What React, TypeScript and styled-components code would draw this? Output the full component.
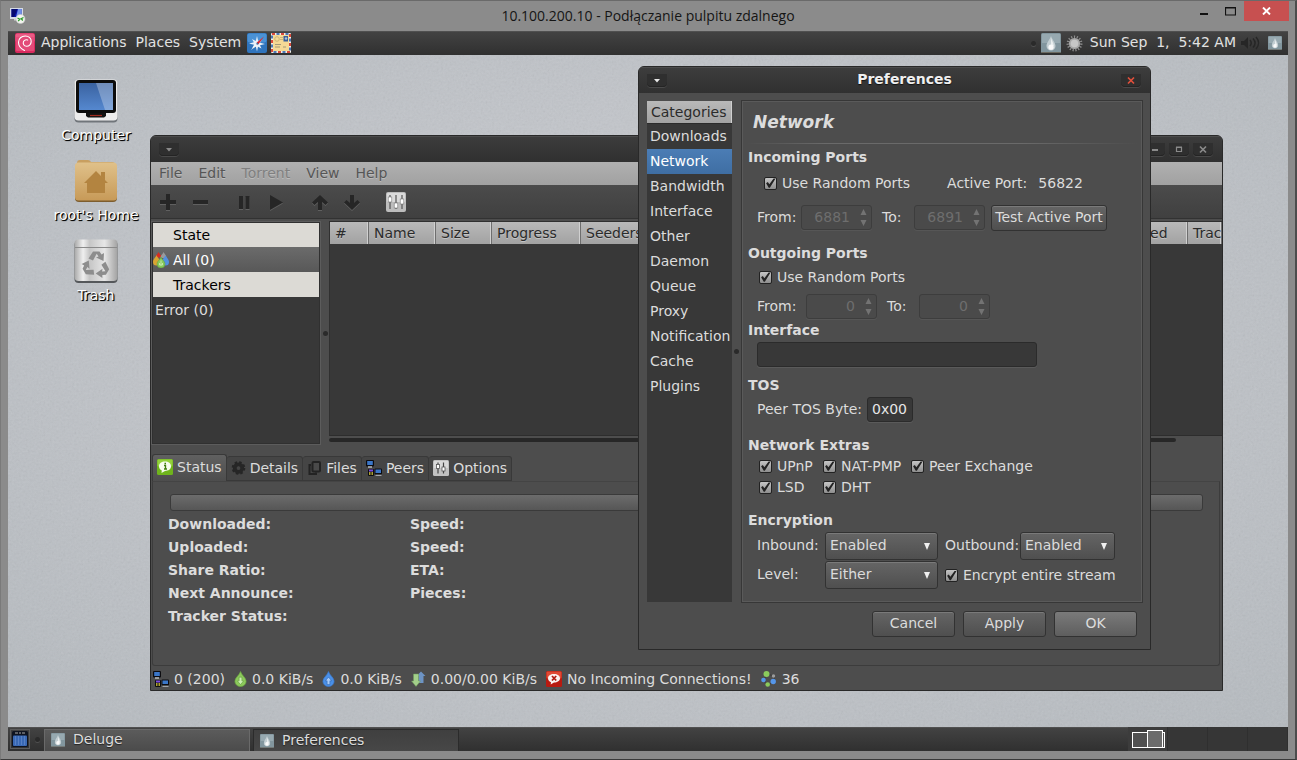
import React from "react";
import styled, { createGlobalStyle, css } from "styled-components";

const Global = createGlobalStyle`
  *, *::before, *::after { box-sizing: border-box; }
  body { margin: 0; background: #8b8b8b; }
  body, button, input, select, table {
    font-family: "DejaVu Sans", sans-serif;
    font-size: 14px;
    line-height: 18px;
    color: #dcdcdc;
  }
  button { border: 0; padding: 0; background: none; white-space: nowrap; }
  h1, h2, h3, p, ul, dl, dd, dt { margin: 0; padding: 0; }
  ul { list-style: none; }
  svg { display: block; flex: none; }
`;

/* ---------- remote session frame ---------- */

const Session = styled.div`
  display: flex;
  flex-direction: column;
  min-height: 100vh;
  background: #8b8b8b;
  border-top: 1px solid #6a6a6a;
  border-left: 1px solid #7a7a7a;
  border-right: 2px solid #4c4c4c;
  border-bottom: 1px solid #3a3a3a;
`;

const SessionBar = styled.header`
  display: grid;
  grid-template-columns: 1fr auto 1fr;
  height: 30px;
`;

const SessionIcon = styled.div`
  padding: 6px 0 0 8px;
`;

const SessionTitle = styled.h1`
  font-family: "Open Sans", "Noto Sans", sans-serif;
  font-weight: 400;
  font-size: 14px;
  line-height: 30px;
  color: #151515;
`;

const CaptionButtons = styled.div`
  display: flex;
  justify-content: flex-end;
  padding-right: 6px;
`;

const CaptionButton = styled.button<{ $close?: boolean }>`
  display: flex;
  align-items: center;
  justify-content: center;
  width: ${(p) => (p.$close ? 45 : 27)}px;
  height: 20px;
  background: ${(p) => (p.$close ? "#c75050" : "transparent")};
`;

const Remote = styled.div`
  flex: 1;
  display: flex;
  flex-direction: column;
  margin: 0 7px 8px 7px;
`;

/* ---------- desktop panels ---------- */

const Panel = styled.div`
  display: flex;
  align-items: center;
  height: 24px;
  flex: none;
  background: linear-gradient(#434343, #303030);
  box-shadow: inset 0 1px 0 #505050;
`;

const PanelMenus = styled.nav`
  display: flex;
  gap: 9px;
  margin: 0 6px 0 6px;
`;

const PanelMenu = styled.button`
  color: #e2e2e2;
  padding-bottom: 2px;
  line-height: 20px;
`;

const PanelIcons = styled.div`
  display: flex;
  gap: 4px;
`;

const Tray = styled.div`
  display: flex;
  align-items: center;
  margin-left: auto;
  padding-right: 6px;
`;

const TrayItem = styled.span<{ $gap?: number }>`
  display: flex;
  align-items: center;
  margin-left: ${(p) => p.$gap ?? 5}px;
`;

const Clock = styled.time`
  margin-left: 7px;
  padding-bottom: 2px;
  white-space: pre;
  line-height: 20px;
  color: #e2e2e2;
`;

const Handle = styled.span`
  width: 5px;
  height: 5px;
  border-radius: 50%;
  background: #2a2a2a;
  box-shadow: 0 1px 0 #505050;
`;

const ShowDesktop = styled.button`
  display: flex;
  align-items: center;
  justify-content: center;
  width: 20px;
  height: 20px;
  margin: 0 5px 0 2px;
  border: 1px solid #5c5c5c;
`;

const Task = styled.button<{ $active?: boolean }>`
  display: flex;
  align-items: center;
  gap: 8px;
  align-self: flex-end;
  width: 206px;
  height: 22px;
  margin-left: ${(p) => (p.$active ? 3 : 4)}px;
  padding: ${(p) => (p.$active ? "1px 0 0 7px" : "0 0 1px 7px")};
  text-shadow: 0 1px 1px #222;
  background: ${(p) => (p.$active ? "linear-gradient(#3f3f3f, #474747)" : "linear-gradient(#5c5c5c, #4b4b4b)")};
  box-shadow: ${(p) => (p.$active ? "inset 1px 1px 0 #2b2b2b, inset -1px 0 0 #2b2b2b" : "inset 1px 1px 0 #6a6a6a, inset -1px 0 0 #6a6a6a")};
`;

const TaskLabel = styled.span`
  padding-bottom: 2px;
`;

const Pager = styled.div`
  display: flex;
  align-self: stretch;
  margin-left: auto;
`;

const Space = styled.span<{ $current?: boolean }>`
  display: flex;
  align-items: center;
  width: 40px;
  padding-left: 4px;
  border-right: 1px solid #2f2f2f;
  background: ${(p) => (p.$current ? "#3c3c3c" : "#363636")};
`;

/* ---------- wallpaper and desktop icons ---------- */

const Desktop = styled.main`
  position: relative;
  flex: 1;
  overflow: hidden;
  background: radial-gradient(ellipse at 50% 45%, #cbcdd3 0%, #c2c5ca 45%, #b5babf 100%);
`;

const Grain = styled.svg`
  position: absolute;
  inset: 0;
  width: 100%;
  height: 100%;
  opacity: 0.16;
`;

const DesktopIcon = styled.button<{ $top: number }>`
  position: absolute;
  left: 31px;
  top: ${(p) => p.$top}px;
  width: 114px;
  display: flex;
  flex-direction: column;
  align-items: center;
  gap: 3px;
  color: #fff;
  text-shadow: 1px 1px 1px #000, 1px 1px 0 #222;
`;

/* ---------- window chrome ---------- */

const Frame = styled.section<{ $left: number; $top: number; $width: number; $height: number }>`
  position: absolute;
  left: ${(p) => p.$left}px;
  top: ${(p) => p.$top}px;
  width: ${(p) => p.$width}px;
  height: ${(p) => p.$height}px;
  display: flex;
  flex-direction: column;
  overflow: hidden;
  background: #4d4d4d;
  border: 1px solid #292929;
  border-radius: 6px 6px 0 0;
`;

const TitleBar = styled.header`
  display: grid;
  grid-template-columns: 1fr auto 1fr;
  align-items: center;
  height: 26px;
  flex: none;
  background: linear-gradient(#3d3d3d, #303030);
  box-shadow: inset 0 1px 0 #4c4c4c;
`;

const TitleText = styled.h2`
  padding: 0 0 2px 20px;
  font-size: 14px;
  line-height: 22px;
  color: #f0f0f0;
  text-shadow: 0 1px 1px #111;
`;

const TitleGroup = styled.div<{ $end?: boolean }>`
  display: flex;
  gap: 4px;
  padding: 0 9px 0 8px;
  justify-content: ${(p) => (p.$end ? "flex-end" : "flex-start")};
`;

const TitleButton = styled.button`
  display: flex;
  align-items: center;
  justify-content: center;
  width: 20px;
  height: 13px;
  border-radius: 0 0 4px 4px;
  background: #2f2f2f;
  box-shadow: 0 1px 0 #4a4a4a, inset 0 -1px 0 #242424;
`;

/* ---------- torrent client ---------- */

const MenuBar = styled.nav`
  display: flex;
  height: 23px;
  flex: none;
  background: linear-gradient(#b0b0b0, #a1a1a1);
`;

const MenuItem = styled.button`
  padding: 0 8px 2px;
  line-height: 20px;
  color: #565656;
  text-shadow: 0 1px 0 #bcbcbc;
  &:disabled { color: #808080; }
`;

const ToolBar = styled.div`
  display: flex;
  align-items: center;
  gap: 12px;
  height: 34px;
  flex: none;
  padding-left: 1px;
  background: linear-gradient(#4b4b4b, #404040);
  border-bottom: 1px solid #323232;
`;

const ToolGroup = styled.div`
  display: flex;
`;

const ToolButton = styled.button`
  display: flex;
  align-items: center;
  justify-content: center;
  width: 32px;
  height: 30px;
`;

const Split = styled.div`
  display: flex;
  height: 226px;
  flex: none;
  padding-top: 2px;
`;

const SideList = styled.div`
  width: 170px;
  flex: none;
  background: #383838;
  border: 1px solid #5c5c5c;
  outline: 1px solid #303030;
  outline-offset: -2px;
`;

const SideRow = styled.button<{ $kind: "group" | "selected" | "plain" }>`
  display: flex;
  align-items: center;
  gap: 4px;
  width: 100%;
  height: 25px;
  padding-left: 1px;
  ${(p) =>
    p.$kind === "group" &&
    css`
      color: #000;
      background: #dcdad5;
      padding-left: 21px;
    `}
  ${(p) =>
    p.$kind === "selected" &&
    css`
      color: #fff;
      background: linear-gradient(#6b6b6b, #585858);
    `}
  ${(p) => p.$kind === "plain" && css` padding-left: 3px; `}
`;

const PaneGap = styled.div<{ $width: number }>`
  display: flex;
  align-items: center;
  justify-content: center;
  width: ${(p) => p.$width}px;
  flex: none;
`;

const ListPane = styled.div`
  flex: 1;
  min-width: 0;
  display: flex;
  flex-direction: column;
`;

const ListArea = styled.div`
  height: 215px;
  background: #383838;
  border-top: 1px solid #303030;
  border-bottom: 1px solid #2d2d2d;
  border-left: 1px solid #303030;
  overflow: hidden;
`;

const Columns = styled.table`
  width: 100%;
  table-layout: fixed;
  border-collapse: collapse;
`;

const Column = styled.th<{ $width: number }>`
  width: ${(p) => p.$width}px;
  height: 22px;
  padding: 0 0 0 5px;
  overflow: hidden;
  text-align: left;
  font-weight: 400;
  line-height: 20px;
  white-space: nowrap;
  color: #2b2b2b;
  background: linear-gradient(#b9b9b9, #a2a2a2);
  box-shadow: inset -1px 0 0 #6e6e6e, inset -2px 0 0 #d0d0d0;
  text-shadow: 0 1px 0 #c4c4c4;
`;

const ScrollTrack = styled.div`
  width: 847px;
  height: 4px;
  margin-top: 2px;
  border-radius: 2px;
  background: #272727;
`;

const Notebook = styled.div`
  flex: 1;
  display: flex;
  flex-direction: column;
  padding: 9px 2px 0 1px;
`;

const TabRow = styled.div`
  display: flex;
  align-items: flex-end;
  height: 27px;
`;

const Tab = styled.button<{ $active?: boolean }>`
  display: flex;
  align-items: center;
  gap: 4px;
  height: ${(p) => (p.$active ? 27 : 25)}px;
  padding: ${(p) => (p.$active ? "0 4px 2px" : "0 4px 1px")};
  border: 1px solid #393939;
  border-left-width: ${(p) => (p.$active ? 1 : 0)}px;
  border-bottom: ${(p) => (p.$active ? "0" : "1px solid #393939")};
  border-radius: 3px 3px 0 0;
  background: ${(p) => (p.$active ? "linear-gradient(#606060, #4d4d4d)" : "#454545")};
`;

const TabPage = styled.div`
  flex: 1;
  border: 1px solid #3c3c3c;
  border-top-color: #444;
  border-radius: 0 0 3px 3px;
  padding: 12px 16px 0 15px;
`;

const Gauge = styled.div`
  height: 17px;
  margin-left: 2px;
  border: 1px solid #3a3a3a;
  border-radius: 3px;
  background: linear-gradient(#6c6c6c, #565656);
`;

const Stats = styled.dl`
  display: grid;
  grid-template-columns: 242px 1fr;
  grid-auto-rows: 18px;
  row-gap: 5px;
  margin-top: 4px;
  font-weight: 700;
`;

const StatusBar = styled.footer`
  display: flex;
  align-items: center;
  gap: 9px;
  height: 24px;
  flex: none;
  padding: 1px 0 0 2px;
`;

const StatusItem = styled.span`
  display: flex;
  align-items: center;
  gap: 5px;
  white-space: nowrap;
`;

/* ---------- preferences dialog ---------- */

const DialogBody = styled.div`
  display: flex;
  padding: 7px 7px 0 8px;
`;

const Categories = styled.nav`
  width: 85px;
  height: 501px;
  margin-top: 1px;
  flex: none;
  background: #383838;
`;

const CategoryHead = styled.div`
  height: 23px;
  padding-left: 4px;
  line-height: 23px;
  color: #2b2b2b;
  background: linear-gradient(#b9b9b9, #a2a2a2);
  border-bottom: 1px solid #2b2b2b;
  box-shadow: inset -1px 0 0 #d0d0d0;
`;

const Category = styled.button<{ $selected?: boolean }>`
  display: block;
  width: 100%;
  height: 25px;
  padding: 0 0 2px 3px;
  text-align: left;
  color: ${(p) => (p.$selected ? "#fff" : "#dcdcdc")};
  background: ${(p) => (p.$selected ? "linear-gradient(#4b7db5, #3f6ea3)" : "transparent")};
`;

const Page = styled.div`
  flex: 1;
  height: 503px;
  padding: 0 5px 0 6px;
  border: 1px solid #373737;
  box-shadow: inset 0 0 0 1px #5a5a5a;
`;

const PageTitle = styled.h2`
  height: 43px;
  padding-left: 5px;
  font-size: 17px;
  font-style: italic;
  line-height: 43px;
  border-bottom: 1px solid;
  border-image: linear-gradient(90deg, #4d4d4d, #6a6a6a 20%, #6a6a6a 70%, #4d4d4d) 1;
`;

const Section = styled.section<{ $gap: number }>`
  margin-top: ${(p) => p.$gap}px;
`;

const SectionTitle = styled.h3`
  font-size: 14px;
  line-height: 18px;
`;

const Row = styled.div<{ $top?: number; $indent?: number; $height?: number }>`
  display: flex;
  align-items: center;
  height: ${(p) => p.$height ?? 25}px;
  margin-top: ${(p) => p.$top ?? 0}px;
  padding-left: ${(p) => p.$indent ?? 9}px;
  white-space: nowrap;
`;

const Label = styled.label<{ $width?: number }>`
  width: ${(p) => (p.$width ? `${p.$width}px` : "auto")};
  flex: none;
  padding-bottom: 2px;
  white-space: nowrap;
`;

const CheckLabel = styled.label`
  display: flex;
  align-items: center;
  gap: 5px;
  height: 21px;
  white-space: nowrap;
`;

const Check = styled.input.attrs({ type: "checkbox" })`
  appearance: none;
  width: 13px;
  height: 13px;
  margin: 1px 0 0;
  flex: none;
  border: 1px solid #222;
  border-radius: 2px;
  background: linear-gradient(#c4c4c4, #8e8e8e);
  &:checked::before {
    content: "";
    display: block;
    width: 11px;
    height: 11px;
    background: #222;
    clip-path: polygon(10% 52%, 25% 42%, 40% 62%, 78% 8%, 96% 8%, 44% 94%, 34% 94%);
  }
`;

const SpinBox = styled.div`
  display: flex;
  align-items: center;
  width: 71px;
  height: 25px;
  flex: none;
  padding-right: 3px;
  border: 1px solid #3d3d3d;
  border-radius: 3px;
  background: #4a4a4a;
  box-shadow: 0 1px 0 #565656;
`;

const SpinInput = styled.input`
  flex: 1;
  min-width: 0;
  padding: 0 9px 2px 0;
  border: 0;
  background: none;
  text-align: right;
  color: #6e6e6e;
`;

const ToLabel = styled(Label)`
  margin-left: 10px;
`;

const Entry = styled.input<{ $width: number }>`
  width: ${(p) => p.$width}px;
  height: 25px;
  padding: 0 4px 2px;
  border: 1px solid #2b2b2b;
  border-radius: 3px;
  background: #383838;
  color: #e6e6e6;
  box-shadow: 0 1px 0 #5a5a5a;
`;

const PushButton = styled.button<{ $width: number; $default?: boolean }>`
  width: ${(p) => p.$width}px;
  height: 26px;
  padding-bottom: 2px;
  border: 1px solid #323232;
  border-radius: 3px;
  background: ${(p) => (p.$default ? "linear-gradient(#7a7a7a, #5e5e5e)" : "linear-gradient(#656565, #4f4f4f)")};
  box-shadow: inset 0 1px 0 #7a7a7a;
`;

const TestButton = styled(PushButton)`
  margin-left: 6px;
`;

const Value = styled.span`
  margin-left: 11px;
`;

const ActivePort = styled.span`
  margin-left: 37px;
`;

const Extras = styled.div`
  display: grid;
  grid-template-columns: 64px 88px auto;
  margin-top: 1px;
  padding-left: 11px;
`;

const Encryption = styled.div`
  display: grid;
  grid-template-columns: 68px 113px 6px auto;
  row-gap: 1px;
  align-items: center;
  margin-top: 3px;
  padding-left: 9px;
`;

const Cell = styled.div`
  grid-column: 4;
  display: flex;
  align-items: center;
  padding-left: 1px;
`;

const Drop = styled.span<{ $width: number }>`
  position: relative;
  display: block;
  width: ${(p) => p.$width}px;
  height: 28px;
  svg { position: absolute; right: 7px; top: 11px; pointer-events: none; }
`;

const Select = styled.select`
  appearance: none;
  width: 100%;
  height: 28px;
  padding: 0 0 2px 4px;
  border: 1px solid #323232;
  border-radius: 3px;
  background: linear-gradient(#656565, #4f4f4f);
  box-shadow: inset 0 1px 0 #7a7a7a;
`;

const Actions = styled.div`
  display: flex;
  justify-content: flex-end;
  gap: 8px;
  padding: 8px 13px 0 0;
`;

/* ---------- drawings ---------- */

const SessionGlyph = () => (
  <svg width="17" height="17" viewBox="0 0 17 17">
    <path d="M1 1h13v11H1z" fill="#d5dbe6" />
    <path d="M2.500 2h10v8h-10z" fill="#0a14a8" />
    <path d="M2.500 2h6L5 10H2.500z" fill="#060a70" />
    <path d="M9 2h3.500v8H7z" fill="#6f8fe8" />
    <path d="M5 12h5v1.500H5z" fill="#cfcfcf" />
    <circle cx="11.500" cy="12" r="4.500" fill="#f3f5f0" stroke="#c8c8c8" strokeWidth=".6" />
    <path d="M8.500 11l2.300 1.200-1.600 2M14.500 10.500l-2.300 1.200 1.600 1.800" fill="none" stroke="#2b9b2b" strokeWidth="1.300" />
  </svg>
);

const DebianGlyph = () => (
  <svg width="20" height="20" viewBox="0 0 20 20">
    <rect width="20" height="20" rx="2" fill="#d9295e" />
    <rect x=".5" y=".5" width="19" height="9" rx="2" fill="#ea5a84" />
    <rect x="1" y="4" width="18" height="14" rx="1" fill="#e34a78" />
    <path
      d="M9.500 17.500C5.500 15.500 3.500 12.500 3.500 9.200 3.500 5.600 6.500 3 10.200 3c3.800 0 6.200 2.500 6 5.600-.2 3-2.300 4.900-4.700 4.700-2.600-.2-3.800-2.600-3-4.700.8-1.700 2.600-2.300 4.200-1.500"
      fill="none"
      stroke="#fff"
      strokeWidth="1.100"
      strokeLinecap="round"
    />
  </svg>
);

const CompassGlyph = () => (
  <svg width="20" height="20" viewBox="0 0 20 20">
    <rect width="20" height="20" rx="2" fill="#2f74bd" />
    <rect x=".5" y=".5" width="19" height="9" rx="2" fill="#4a92d6" />
    <path d="M10 3l1.200 5L15 6l-2 3.800 5 1.200-5 1.200 1.500 3.300-3.500-1.800L10 18.500l-1.200-5L5 15.500l2-3.800L2 10.500l4.800-1.200L5 6l3.800 2z" fill="#e8f1fa" />
    <path d="M17 3.500L11.300 11.500 9.500 9.800z" fill="#d9242c" />
    <path d="M4 17L9.500 9.800l1.800 1.700z" fill="#f4f4f4" />
    <circle cx="10.300" cy="10.700" r="1" fill="#3a6ea5" />
  </svg>
);

const MailGlyph = () => (
  <svg width="20" height="20" viewBox="0 0 20 20">
    <rect width="20" height="20" rx="1" fill="#f3efe6" />
    <rect x="1" y="1" width="18" height="18" fill="none" stroke="#d8493c" strokeWidth="2" strokeDasharray="3 6" />
    <rect x="1" y="1" width="18" height="18" fill="none" stroke="#4b77b5" strokeWidth="2" strokeDasharray="3 6" strokeDashoffset="-4.500" />
    <rect x="2" y="2" width="16" height="16" fill="#f5d995" />
    <rect x="12.500" y="3" width="4.500" height="5.500" fill="#3b5f97" />
    <circle cx="15" cy="5.500" r="1.200" fill="#a9c2e2" />
    <circle cx="6" cy="6" r="2.300" fill="none" stroke="#cdb677" />
    <path d="M9 4.500h3M9 6.500h3" stroke="#cdb677" />
    <path d="M4 11.500h6M4 14h5M12 14h3" stroke="#a39a78" />
  </svg>
);

const DropGlyph = ({ size }: { size: number }) => (
  <svg width={size} height={size} viewBox="0 0 20 20">
    <rect width="20" height="20" rx="1.500" fill="#82969e" />
    <rect x="1" y="1" width="18" height="9" fill="#97a9b0" />
    <path d="M.5 19.500h19" stroke="#6d6a60" />
    <path d="M10 3c1 3.500 4.500 6.500 4.500 10a4.500 4.500 0 0 1-9 0c0-3.500 3.500-6.500 4.500-10z" fill="#c3ced2" />
    <path d="M10 5c.7 3 2.800 5 2.800 8h-2.800z" fill="#e9eeef" />
    <circle cx="10" cy="14.200" r="2.600" fill="#fafafa" />
  </svg>
);

const SunGearGlyph = () => (
  <svg width="17" height="17" viewBox="0 0 17 17">
    <circle cx="8.500" cy="8.500" r="6.700" fill="none" stroke="#8f8f8f" strokeWidth="2.500" strokeDasharray="1.200 1.600" />
    <circle cx="8.500" cy="8.500" r="5.600" fill="#a8a8a8" />
    <circle cx="8.500" cy="8.500" r="3.800" fill="#c6c6c6" />
  </svg>
);

const SpeakerGlyph = () => (
  <svg width="20" height="14" viewBox="0 0 20 14">
    <path d="M0 5h3l4-4v12L3 9H0z" fill="#262626" />
    <path d="M9 4c1.500 1.800 1.500 4.200 0 6M12 2.500c2.500 2.700 2.500 6.300 0 9M15 1c3.300 3.600 3.300 8.400 0 12" fill="none" stroke="#262626" strokeWidth="1.500" />
  </svg>
);

const ComputerGlyph = () => (
  <svg width="44" height="44" viewBox="0 0 44 44">
    <defs>
      <linearGradient id="screen" x1="0" y1="0" x2="0" y2="1">
        <stop offset="0" stopColor="#3a62a0" />
        <stop offset="1" stopColor="#5588cf" />
      </linearGradient>
    </defs>
    <rect x=".5" y="1.500" width="43" height="42" rx="4" fill="#70757a" />
    <rect x=".5" y=".5" width="43" height="41" rx="4" fill="#ececec" />
    <rect x="2" y="1" width="40" height="33" rx="3" fill="#0c0c0c" />
    <rect x="5" y="4" width="34" height="27" fill="url(#screen)" />
    <path d="M22 4h17v27h-8z" fill="#fff" opacity=".28" />
    <path d="M12 34h20v3l-2 1.500H14L12 37z" fill="#111" />
    <path d="M16 36.500h12" stroke="#a02a1e" strokeWidth="1.200" />
  </svg>
);

const HomeGlyph = () => (
  <svg width="44" height="44" viewBox="0 0 44 44">
    <defs>
      <linearGradient id="folder" x1="0" y1="0" x2="0" y2="1">
        <stop offset="0" stopColor="#e0c18a" />
        <stop offset="1" stopColor="#c79a58" />
      </linearGradient>
    </defs>
    <path d="M1 8h42v31q0 4-4 4H5q-4 0-4-4z" fill="#7d5d2e" />
    <path d="M3 4q0-3 3-3h8q2 0 3 2h21q3 0 3 3v4H3z" fill="#c89f60" />
    <rect x="1" y="3.500" width="42" height="38" rx="3.500" fill="url(#folder)" />
    <path d="M22 12l12 12h-3v10H13V24h-3zM27 13h4v8l-4-4z" fill="#b38440" />
  </svg>
);

const TrashGlyph = () => (
  <svg width="44" height="44" viewBox="0 0 44 44">
    <defs>
      <linearGradient id="can" x1="0" y1="0" x2="1" y2="0">
        <stop offset="0" stopColor="#a8a8a8" />
        <stop offset=".2" stopColor="#efefef" />
        <stop offset=".35" stopColor="#c6c6c6" />
        <stop offset=".7" stopColor="#e6e6e6" />
        <stop offset="1" stopColor="#a2a2a2" />
      </linearGradient>
    </defs>
    <rect x=".5" y="2" width="43" height="42" rx="4" fill="#55585b" />
    <rect x=".5" y=".5" width="43" height="41.500" rx="4" fill="url(#can)" />
    <path d="M1 8.500h42" stroke="#8a8a8a" />
    {[0, 120, 240].map((turn) => (
      <g key={turn} transform={`rotate(${turn} 22 26)`}>
        <path d="M14.500 19.500l4.500-7h6.500l2 3 2.500-1.500-.5 8-7.500-3.500 2.500-1-1.800-2.800-3.700 6.800z" fill="#8d8d8d" />
      </g>
    ))}
  </svg>
);

const Mark = ({ kind, color }: { kind: "menu" | "min" | "max" | "close"; color: string }) => (
  <svg width="10" height="9" viewBox="0 0 10 9">
    {kind === "menu" && <path d="M2 3h6L5 6.500z" fill={color} />}
    {kind === "min" && <path d="M2 5h6" stroke={color} strokeWidth="2" />}
    {kind === "max" && <path d="M2.500 2.500h5v4h-5zM2 2h6" fill="none" stroke={color} strokeWidth="1.200" />}
    {kind === "close" && <path d="M2 1.500l6 6M8 1.500l-6 6" stroke={color} strokeWidth="1.700" />}
  </svg>
);

const ToolGlyph = ({ path, color = "#262626" }: { path: string; color?: string }) => (
  <svg width="18" height="18" viewBox="0 0 18 18">
    <path d={path} fill="#606060" transform="translate(0 1)" />
    <path d={path} fill={color} />
  </svg>
);

const SlidersGlyph = ({ size }: { size: number }) => (
  <svg width={size} height={size} viewBox="0 0 20 20">
    <rect width="20" height="20" rx="2" fill="#bdbdbd" />
    <rect x="1" y="1" width="18" height="9" rx="1" fill="#dadada" />
    <path d="M4 3v14M10 3v14M16 3v14" stroke="#555" strokeWidth="1.200" />
    <g fill="#fff" stroke="#777" strokeWidth=".6">
      <rect x="2.200" y="5" width="3.600" height="5" />
      <rect x="8.200" y="11" width="3.600" height="5" />
      <rect x="14.200" y="7" width="3.600" height="5" />
    </g>
  </svg>
);

const MiniSlidersGlyph = () => (
  <svg width="16" height="16" viewBox="0 0 16 16">
    <rect width="16" height="16" rx="1.500" fill="#c2c2c2" />
    <rect x="1" y="1" width="14" height="7" fill="#dadada" />
    <path d="M5 2.500v11M10.500 2.500v11" stroke="#444" strokeWidth="1.200" />
    <g fill="#fff" stroke="#555" strokeWidth=".8">
      <rect x="3.500" y="4.500" width="3" height="4" />
      <rect x="9" y="7" width="3" height="4" />
    </g>
  </svg>
);

const dropPath = "M8 0c1 4 6 6.500 6 10.500A5.500 5.500 0 0 1 8 16a5.500 5.500 0 0 1-6-5.500C2 6.500 7 4 8 0z";

const FlowDrop = ({ down }: { down?: boolean }) => (
  <svg width="13" height="16" viewBox="1 0 14 16">
    <path d={dropPath} fill={down ? "#8cc95c" : "#4a90e8"} stroke={down ? "#6fae42" : "#3c7bd0"} strokeWidth=".8" />
    <path
      d={down ? "M6.500 6h3v4h2L8 14l-3.500-4h2z" : "M6.500 14h3v-4h2L8 6l-3.500 4h2z"}
      fill={down ? "#cdeeb4" : "#a8cbf8"}
      stroke={down ? "#5f9a38" : "#2f65b0"}
      strokeWidth=".6"
    />
  </svg>
);

const AllGlyph = () => (
  <svg width="16" height="16" viewBox="0 0 16 16">
    <path d="M5.500 0c1 2 3 3 3 5.500h-6C2.500 3 5 2 5.500 0z" fill="#d82c20" />
    <path d="M10.500 0c1 2 3 3 3 6h-6C7.500 3 10 2 10.500 0z" fill="#9a9a9a" />
    <path d="M3.500 3c.7 2.500 3.500 4 3.500 7a3.500 3.500 0 0 1-7 0c0-3 2.800-4.500 3.500-7z" fill="#d8a432" />
    <path d="M12.500 3c.7 2.500 3.500 4 3.500 7a3.500 3.500 0 0 1-7 0c0-3 2.800-4.500 3.500-7z" fill="#5391e0" />
    <path d="M8 5c.8 2.500 4 4 4 7a4 4 0 0 1-8 0c0-3 3.200-4.500 4-7z" fill="#86c95a" stroke="#5f9f38" strokeWidth=".5" />
    <path d="M8 8.500v5M6.500 11v2h3v-2" fill="none" stroke="#d3f0bd" strokeWidth=".8" />
  </svg>
);

const PeersGlyph = () => (
  <svg width="16" height="16" viewBox="0 0 16 16">
    <rect x="0" y="0" width="8" height="6.500" rx="1" fill="#0c0c10" />
    <rect x="1.200" y="1" width="5.600" height="4" fill="#3a76c8" />
    <path d="M2 7h4" stroke="#b9bcc0" strokeWidth="1.500" />
    <rect x="2" y="9" width="6" height="7" rx="1" fill="#0c0c10" />
    <rect x="3" y="9.500" width="4" height="2" fill="#7a4ae0" />
    <path d="M3.500 15v-3M5 15v-3M6.500 15v-3" stroke="#d8c93a" strokeWidth=".8" />
    <rect x="8.500" y="8.500" width="7.500" height="6" rx="1" fill="#0c0c10" />
    <rect x="9.500" y="9.500" width="5.500" height="3.500" fill="#3a76c8" />
    <path d="M9.500 15.300h6" stroke="#b9bcc0" />
  </svg>
);

const InfoGlyph = () => (
  <svg width="16" height="16" viewBox="0 0 16 16">
    <rect width="16" height="16" rx="1.500" fill="#6fb41c" />
    <rect x=".5" y=".5" width="15" height="7" rx="1" fill="#93d03c" />
    <path d="M8 2.500c3.500 0 6 2 6 4.800S11.500 12 8 12l-3.500 2 .3-2.500C3 10.600 2 9.200 2 7.300 2 4.500 4.500 2.500 8 2.500z" fill="#f6fbef" />
    <path d="M7 6.500h1.500V10M7 10h3M7.500 4.500h1.500" fill="none" stroke="#3f7d0d" strokeWidth="1.300" />
  </svg>
);

const GearGlyph = () => (
  <svg width="15" height="16" viewBox="0 0 16 16">
    <circle cx="8" cy="8" r="5.800" fill="none" stroke="#262626" strokeWidth="3" strokeDasharray="2.500 2.050" />
    <circle cx="8" cy="8" r="4" fill="none" stroke="#262626" strokeWidth="4" />
    <circle cx="8" cy="8" r="1.600" fill="#454545" />
  </svg>
);

const FilesGlyph = () => (
  <svg width="15" height="16" viewBox="0 0 15 16">
    <path d="M4 5H2.500v9H9v-1.500" fill="none" stroke="#232323" strokeWidth="2" />
    <rect x="5.500" y="2" width="7.500" height="9.500" rx="1" fill="#4a4a4a" stroke="#232323" strokeWidth="2" />
  </svg>
);

const TrafficGlyph = () => (
  <svg width="15" height="16" viewBox="0 0 15 16">
    <path d="M7.500 12V5H5.500L10 .5 14.500 5h-2v7z" fill="#6d93c4" />
    <path d="M2.500 3h5v7h2L5 15.500.5 10h2z" fill="#a3cf8a" stroke="#6f9c58" strokeWidth=".5" />
  </svg>
);

const AlertGlyph = () => (
  <svg width="16" height="16" viewBox="0 0 16 16">
    <rect width="16" height="16" rx="1.500" fill="#b81a10" />
    <rect x=".5" y=".5" width="15" height="7" rx="1" fill="#df4a34" />
    <path d="M8 3c3.500 0 6 1.800 6 4.300S11.500 11.500 8 11.500l-3.300 2 .3-2.300C3 10.400 2 9.200 2 7.300 2 4.800 4.500 3 8 3z" fill="#fbf3f1" />
    <path d="M6 5l4.200 4.500M10.200 5L6 9.500" stroke="#b01c12" strokeWidth="1.800" />
  </svg>
);

const DhtGlyph = () => (
  <svg width="16" height="16" viewBox="0 0 16 16">
    <path d="M6 3l7 2v6l-6 3-4-5z" fill="none" stroke="#3a3a3a" />
    <circle cx="5.500" cy="3" r="3" fill="#8bcb5c" />
    <circle cx="12.500" cy="5" r="1.700" fill="#9c9c9c" />
    <circle cx="2.500" cy="9" r="2.300" fill="#5596ea" />
    <circle cx="12.200" cy="10.500" r="2.700" fill="#5596ea" />
    <circle cx="6.700" cy="13.500" r="2.300" fill="#8bcb5c" />
  </svg>
);

const DesktopGlyph = () => (
  <svg width="16" height="16" viewBox="0 0 16 16">
    <rect width="16" height="16" rx="1.500" fill="#0f1420" />
    <path d="M3 2h3M7 2h2M10 2h3" stroke="#aaa" />
    <rect x="1" y="4.500" width="14" height="10.500" rx="1" fill="#3a69b4" />
    <path d="M3.500 5v9M6.500 5v9M9.500 5v9M12.500 5v9" stroke="#5680c4" />
  </svg>
);

const MiniWindows = () => (
  <svg width="34" height="20" viewBox="0 0 34 20">
    <rect x=".5" y="3.500" width="32" height="15" fill="#505050" stroke="#fff" />
    <rect x="15.500" y="1.500" width="15" height="17" fill="#6c6c6c" stroke="#fff" />
  </svg>
);

const Arrows = () => (
  <svg width="9" height="21" viewBox="0 0 9 21">
    <path d="M1.500 8h6L4.500 2zM1.500 13h6L4.500 19z" fill="#737373" />
  </svg>
);

const DropArrow = () => (
  <svg width="8" height="8" viewBox="0 0 8 8">
    <path d="M1 0h6L4 7z" fill="#f0f0f0" />
  </svg>
);

/* ---------- composition ---------- */

const Spin = ({ id, value }: { id: string; value: string }) => (
  <SpinBox>
    <SpinInput id={id} inputMode="numeric" defaultValue={value} disabled />
    <Arrows />
  </SpinBox>
);

const Tick = ({ children }: { children: React.ReactNode }) => (
  <CheckLabel>
    <Check defaultChecked />
    {children}
  </CheckLabel>
);

const categories = ["Downloads", "Network", "Bandwidth", "Interface", "Other", "Daemon", "Queue", "Proxy", "Notification", "Cache", "Plugins"];

const Preferences = () => (
  <Frame $left={630} $top={11} $width={513} $height={584} role="dialog">
    <TitleBar>
      <TitleGroup>
        <TitleButton aria-label="Window menu"><Mark kind="menu" color="#e8e8e8" /></TitleButton>
      </TitleGroup>
      <TitleText>Preferences</TitleText>
      <TitleGroup $end>
        <TitleButton aria-label="Close"><Mark kind="close" color="#e0503c" /></TitleButton>
      </TitleGroup>
    </TitleBar>
    <DialogBody>
      <Categories>
        <CategoryHead>Categories</CategoryHead>
        {categories.map((name) => (
          <Category key={name} $selected={name === "Network"}>{name}</Category>
        ))}
      </Categories>
      <PaneGap $width={9}><Handle /></PaneGap>
      <Page>
        <PageTitle>Network</PageTitle>
        <Section $gap={4}>
          <SectionTitle>Incoming Ports</SectionTitle>
          <Row $top={6} $indent={16} $height={21}>
            <Tick>Use Random Ports</Tick>
            <ActivePort>Active Port:</ActivePort>
            <Value>56822</Value>
          </Row>
          <Row $top={12}>
            <Label $width={44} htmlFor="in-from">From:</Label>
            <Spin id="in-from" value="6881" />
            <ToLabel $width={32} htmlFor="in-to">To:</ToLabel>
            <Spin id="in-to" value="6891" />
            <TestButton $width={116}>Test Active Port</TestButton>
          </Row>
        </Section>
        <Section $gap={14}>
          <SectionTitle>Outgoing Ports</SectionTitle>
          <Row $top={4} $indent={11} $height={21}>
            <Tick>Use Random Ports</Tick>
          </Row>
          <Row $top={7}>
            <Label $width={49} htmlFor="out-from">From:</Label>
            <Spin id="out-from" value="0" />
            <ToLabel $width={32} htmlFor="out-to">To:</ToLabel>
            <Spin id="out-to" value="0" />
          </Row>
        </Section>
        <Section $gap={2}>
          <SectionTitle><label htmlFor="interface">Interface</label></SectionTitle>
          <Row $top={3}>
            <Entry id="interface" $width={280} />
          </Row>
        </Section>
        <Section $gap={9}>
          <SectionTitle>TOS</SectionTitle>
          <Row $top={3}>
            <Label $width={110} htmlFor="tos">Peer TOS Byte:</Label>
            <Entry id="tos" $width={46} defaultValue="0x00" />
          </Row>
        </Section>
        <Section $gap={14}>
          <SectionTitle>Network Extras</SectionTitle>
          <Extras>
            <Tick>UPnP</Tick>
            <Tick>NAT-PMP</Tick>
            <Tick>Peer Exchange</Tick>
            <Tick>LSD</Tick>
            <Tick>DHT</Tick>
          </Extras>
        </Section>
        <Section $gap={14}>
          <SectionTitle>Encryption</SectionTitle>
          <Encryption>
            <Label htmlFor="inbound">Inbound:</Label>
            <Drop $width={113}>
              <Select id="inbound"><option>Enabled</option></Select>
              <DropArrow />
            </Drop>
            <Cell>
              <Label $width={75} htmlFor="outbound">Outbound:</Label>
              <Drop $width={95}>
                <Select id="outbound"><option>Enabled</option></Select>
                <DropArrow />
              </Drop>
            </Cell>
            <Label htmlFor="level">Level:</Label>
            <Drop $width={113}>
              <Select id="level"><option>Either</option></Select>
              <DropArrow />
            </Drop>
            <Cell><Tick>Encrypt entire stream</Tick></Cell>
          </Encryption>
        </Section>
      </Page>
    </DialogBody>
    <Actions>
      <PushButton $width={83}>Cancel</PushButton>
      <PushButton $width={83}>Apply</PushButton>
      <PushButton $width={83} $default>OK</PushButton>
    </Actions>
  </Frame>
);

const tools = [
  [
    { name: "Add", path: "M7 1h4v6h6v4h-6v6H7v-6H1V7h6z" },
    { name: "Remove", path: "M2 7h15v4H2z" },
  ],
  [
    { name: "Pause", path: "M4 3h4v13H4zM10.500 3H14.500v13h-4z" },
    { name: "Resume", path: "M3 2l13 7.500L3 17z" },
  ],
  [
    { name: "Move up", path: "M9 2l8 7.500-2.500 2.500L11 9v8H7V9l-3.500 3L1 9.500z" },
    { name: "Move down", path: "M9 17l8-7.500L14.500 7 11 10V2H7v8L3.500 7 1 9.500z" },
  ],
];

const Client = () => (
  <Frame $left={142} $top={80} $width={1073} $height={556}>
    <TitleBar>
      <TitleGroup>
        <TitleButton aria-label="Window menu"><Mark kind="menu" color="#8a8a8a" /></TitleButton>
      </TitleGroup>
      <span />
      <TitleGroup $end>
        <TitleButton aria-label="Minimize"><Mark kind="min" color="#8a8a8a" /></TitleButton>
        <TitleButton aria-label="Maximize"><Mark kind="max" color="#8a8a8a" /></TitleButton>
        <TitleButton aria-label="Close"><Mark kind="close" color="#8a8a8a" /></TitleButton>
      </TitleGroup>
    </TitleBar>
    <MenuBar>
      <MenuItem>File</MenuItem>
      <MenuItem>Edit</MenuItem>
      <MenuItem disabled>Torrent</MenuItem>
      <MenuItem>View</MenuItem>
      <MenuItem>Help</MenuItem>
    </MenuBar>
    <ToolBar>
      {tools.map((group, i) => (
        <ToolGroup key={i}>
          {group.map((tool) => (
            <ToolButton key={tool.name} aria-label={tool.name}><ToolGlyph path={tool.path} /></ToolButton>
          ))}
        </ToolGroup>
      ))}
      <ToolGroup>
        <ToolButton aria-label="Preferences"><SlidersGlyph size={20} /></ToolButton>
      </ToolGroup>
    </ToolBar>
    <Split>
      <SideList>
        <SideRow $kind="group">State</SideRow>
        <SideRow $kind="selected"><AllGlyph />All (0)</SideRow>
        <SideRow $kind="group">Trackers</SideRow>
        <SideRow $kind="plain">Error (0)</SideRow>
      </SideList>
      <PaneGap $width={8}><Handle /></PaneGap>
      <ListPane>
        <ListArea>
          <Columns>
            <thead>
              <tr>
                <Column $width={39}>#</Column>
                <Column $width={67}>Name</Column>
                <Column $width={56}>Size</Column>
                <Column $width={89}>Progress</Column>
                <Column $width={80}>Seeders</Column>
                <td />
                <Column $width={70}>Added</Column>
                <Column $width={34}>Tracker</Column>
              </tr>
            </thead>
          </Columns>
        </ListArea>
        <ScrollTrack />
      </ListPane>
    </Split>
    <Notebook>
      <TabRow>
        <Tab $active><InfoGlyph />Status</Tab>
        <Tab><GearGlyph />Details</Tab>
        <Tab><FilesGlyph />Files</Tab>
        <Tab><PeersGlyph />Peers</Tab>
        <Tab><MiniSlidersGlyph />Options</Tab>
      </TabRow>
      <TabPage>
        <Gauge />
        <Stats>
          <dt>Downloaded:</dt><dt>Speed:</dt>
          <dt>Uploaded:</dt><dt>Speed:</dt>
          <dt>Share Ratio:</dt><dt>ETA:</dt>
          <dt>Next Announce:</dt><dt>Pieces:</dt>
          <dt>Tracker Status:</dt>
        </Stats>
      </TabPage>
    </Notebook>
    <StatusBar>
      <StatusItem><PeersGlyph />0 (200)</StatusItem>
      <StatusItem><FlowDrop down />0.0 KiB/s</StatusItem>
      <StatusItem><FlowDrop />0.0 KiB/s</StatusItem>
      <StatusItem><TrafficGlyph />0.00/0.00 KiB/s</StatusItem>
      <StatusItem><AlertGlyph />No Incoming Connections!</StatusItem>
      <StatusItem><DhtGlyph />36</StatusItem>
    </StatusBar>
  </Frame>
);

export default function App() {
  return (
    <>
      <Global />
      <Session>
        <SessionBar>
          <SessionIcon><SessionGlyph /></SessionIcon>
          <SessionTitle>10.100.200.10 - Podłączanie pulpitu zdalnego</SessionTitle>
          <CaptionButtons>
            <CaptionButton aria-label="Minimize">
              <svg width="10" height="10" viewBox="0 0 10 10"><path d="M1 8h8" stroke="#111" strokeWidth="2" /></svg>
            </CaptionButton>
            <CaptionButton aria-label="Restore">
              <svg width="11" height="9" viewBox="0 0 11 9"><path d="M.5 .5h10v7.500H.5zM0 1h11" fill="none" stroke="#111" strokeWidth="1.200" /></svg>
            </CaptionButton>
            <CaptionButton $close aria-label="Close">
              <svg width="9" height="8" viewBox="0 0 9 8"><path d="M1 .5l7 7M8 .5l-7 7" stroke="#fff" strokeWidth="1.900" /></svg>
            </CaptionButton>
          </CaptionButtons>
        </SessionBar>
        <Remote>
          <Panel>
            <TrayItem $gap={7}><DebianGlyph /></TrayItem>
            <PanelMenus>
              <PanelMenu>Applications</PanelMenu>
              <PanelMenu>Places</PanelMenu>
              <PanelMenu>System</PanelMenu>
            </PanelMenus>
            <PanelIcons>
              <CompassGlyph />
              <MailGlyph />
            </PanelIcons>
            <Tray>
              <Handle />
              <TrayItem><DropGlyph size={20} /></TrayItem>
              <TrayItem><SunGearGlyph /></TrayItem>
              <Clock>Sun Sep  1,  5:42 AM</Clock>
              <TrayItem $gap={5}><SpeakerGlyph /></TrayItem>
              <TrayItem $gap={7}><DropGlyph size={14} /></TrayItem>
            </Tray>
          </Panel>
          <Desktop>
            <Grain aria-hidden="true">
              <filter id="grain">
                <feTurbulence type="fractalNoise" baseFrequency="0.45" numOctaves="2" />
                <feColorMatrix type="saturate" values="0" />
              </filter>
              <rect width="100%" height="100%" filter="url(#grain)" />
            </Grain>
            <DesktopIcon $top={24}><ComputerGlyph />Computer</DesktopIcon>
            <DesktopIcon $top={104}><HomeGlyph />root's Home</DesktopIcon>
            <DesktopIcon $top={184}><TrashGlyph />Trash</DesktopIcon>
            <Client />
            <Preferences />
          </Desktop>
          <Panel>
            <ShowDesktop aria-label="Show desktop"><DesktopGlyph /></ShowDesktop>
            <Handle />
            <Task><DropGlyph size={14} /><TaskLabel>Deluge</TaskLabel></Task>
            <Task $active><DropGlyph size={14} /><TaskLabel>Preferences</TaskLabel></Task>
            <Pager>
              <Space $current><MiniWindows /></Space>
              <Space />
              <Space />
              <Space />
            </Pager>
          </Panel>
        </Remote>
      </Session>
    </>
  );
}
